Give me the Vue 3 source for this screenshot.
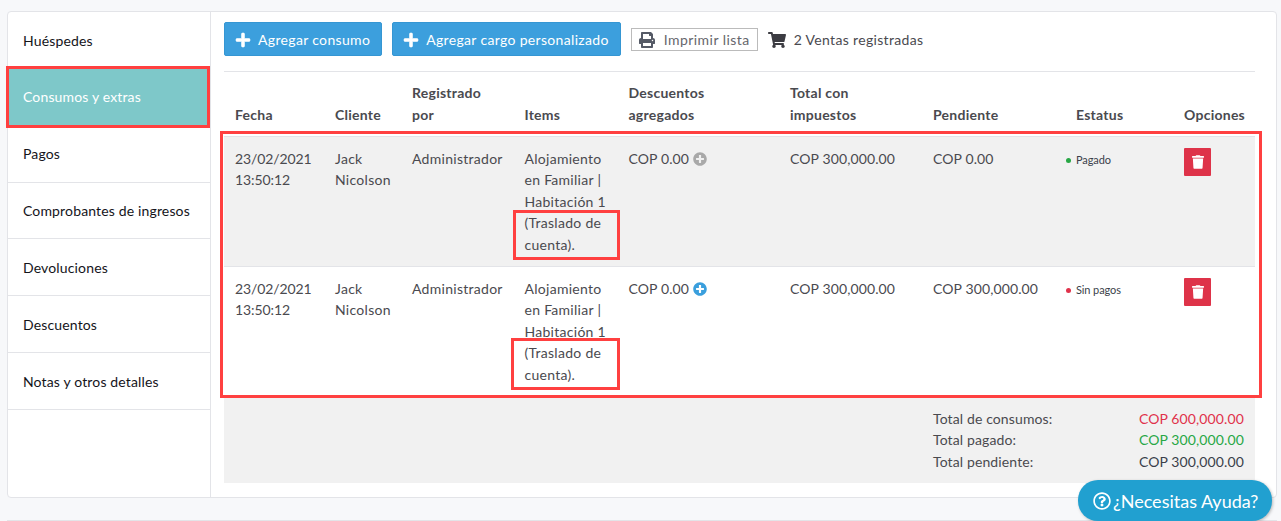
<script setup>
const menu = ['Huéspedes', 'Consumos y extras', 'Pagos', 'Comprobantes de ingresos', 'Devoluciones', 'Descuentos', 'Notas y otros detalles']
const heads = ['Fecha', 'Cliente', 'Registrado por', 'Items', 'Descuentos agregados', 'Total con impuestos', 'Pendiente', 'Estatus', 'Opciones']
const rows = [
  { pending: 'COP 0.00', status: 'Pagado', kind: 'paid', shaded: true },
  { pending: 'COP 300,000.00', status: 'Sin pagos', kind: 'unpaid', shaded: false },
]
const plus = 'M416 208H272V64c0-17.67-14.33-32-32-32h-32c-17.67 0-32 14.33-32 32v144H32c-17.67 0-32 14.33-32 32v32c0 17.67 14.33 32 32 32h144v144c0 17.67 14.33 32 32 32h32c17.67 0 32-14.33 32-32V304h144c17.67 0 32-14.33 32-32v-32c0-17.67-14.33-32-32-32z'
const plusCircle = 'M256 8C119 8 8 119 8 256s111 248 248 248 248-111 248-248S393 8 256 8zm144 276c0 6.6-5.4 12-12 12h-92v92c0 6.6-5.4 12-12 12h-56c-6.6 0-12-5.4-12-12v-92h-92c-6.6 0-12-5.4-12-12v-56c0-6.6 5.4-12 12-12h92v-92c0-6.6 5.4-12 12-12h56c6.6 0 12 5.4 12 12v92h92c6.6 0 12 5.4 12 12v56z'
const trash = 'M432 32H312l-9.4-18.7A24 24 0 0 0 281.1 0H166.8a23.72 23.72 0 0 0-21.4 13.3L136 32H16A16 16 0 0 0 0 48v32a16 16 0 0 0 16 16h416a16 16 0 0 0 16-16V48a16 16 0 0 0-16-16zM53.2 467a48 48 0 0 0 47.9 45h245.8a48 48 0 0 0 47.9-45L416 128H32z'
</script>

<template>
  <div class="page">
    <div class="card">
      <nav class="side">
        <div v-for="(m, i) in menu" :key="m" class="item" :class="{ active: i === 1 }">{{ m }}</div>
      </nav>
      <main class="content">
        <div class="toolbar">
          <button class="btn">
            <svg class="plus" viewBox="0 0 448 512"><path :d="plus" fill="#fff" stroke="#fff" stroke-width="18" /></svg>Agregar consumo
          </button>
          <button class="btn">
            <svg class="plus" viewBox="0 0 448 512"><path :d="plus" fill="#fff" stroke="#fff" stroke-width="18" /></svg>Agregar cargo personalizado
          </button>
          <button class="print">
            <svg class="printer" viewBox="0 0 512 512"><path fill="#555a66" d="M448 192V77.25c0-8.49-3.37-16.62-9.37-22.63L393.37 9.37c-6-6-14.14-9.37-22.63-9.37H96C78.33 0 64 14.33 64 32v160c-35.35 0-64 28.65-64 64v112c0 8.84 7.16 16 16 16h48v96c0 17.67 14.33 32 32 32h320c17.67 0 32-14.33 32-32v-96h48c8.84 0 16-7.16 16-16V256c0-35.35-28.65-64-64-64zm-64 256H128v-96h256v96zm0-224H128V64h192v48c0 8.84 7.16 16 16 16h48v96zm48 72c-13.25 0-24-10.75-24-24 0-13.26 10.75-24 24-24s24 10.74 24 24c0 13.25-10.75 24-24 24z" /></svg>Imprimir lista
          </button>
          <div class="sales">
            <svg class="cart" viewBox="0 0 576 512"><path fill="#3c3c42" d="M528.12 301.319l47.273-208C578.806 78.301 567.391 64 551.99 64H159.208l-9.166-44.81C147.758 8.021 137.93 0 126.529 0H24C10.745 0 0 10.745 0 24v16c0 13.255 10.745 24 24 24h69.883l70.248 343.435C147.325 417.1 136 435.222 136 456c0 30.928 25.072 56 56 56s56-25.072 56-56c0-15.674-6.447-29.835-16.824-40h209.647C430.447 426.165 424 440.326 424 456c0 30.928 25.072 56 56 56s56-25.072 56-56c0-22.172-12.888-41.332-31.579-50.405l5.517-24.276c3.413-15.018-8.002-29.319-23.403-29.319H218.117l-6.545-32h293.145c11.206 0 20.92-7.754 23.403-18.681z" /></svg>2 Ventas registradas
          </div>
        </div>

        <div class="table">
          <div class="grid head">
            <div v-for="h in heads" :key="h" class="cell">{{ h }}</div>
          </div>
          <div v-for="(r, i) in rows" :key="i" class="grid row" :class="{ shaded: r.shaded }">
            <div class="cell date">23/02/2021 13:50:12</div>
            <div class="cell">Jack Nicolson</div>
            <div class="cell">Administrador</div>
            <div class="cell">Alojamiento en Familiar | Habitación 1 (Traslado de cuenta).</div>
            <div class="cell num discount">
              COP 0.00
              <svg class="pc" viewBox="0 0 512 512"><path :d="plusCircle" :fill="r.shaded ? '#a9a9a9' : '#3a9fdd'" /></svg>
            </div>
            <div class="cell num">COP 300,000.00</div>
            <div class="cell num">{{ r.pending }}</div>
            <div class="cell status" :class="r.kind"><span class="dot"></span>{{ r.status }}</div>
            <div class="cell">
              <button class="del"><svg viewBox="0 0 448 512"><path :d="trash" fill="#fff" /></svg></button>
            </div>
          </div>
          <div class="totals">
            <div class="sum">
              <div class="line"><span>Total de consumos:</span><span class="red">COP 600,000.00</span></div>
              <div class="line"><span>Total pagado:</span><span class="green">COP 300,000.00</span></div>
              <div class="line"><span>Total pendiente:</span><span class="dark">COP 300,000.00</span></div>
            </div>
          </div>
        </div>
      </main>
    </div>
    <div class="next"></div>

    <div class="mark m-side"></div>
    <div class="mark m-table"></div>
    <div class="mark m-item1"></div>
    <div class="mark m-item2"></div>

    <button class="help">
      <svg viewBox="0 0 512 512"><path fill="#fff" d="M256 8C119.043 8 8 119.083 8 256c0 136.997 111.043 248 248 248s248-111.003 248-248C504 119.083 392.957 8 256 8zm0 448c-110.532 0-200-89.431-200-200 0-110.495 89.472-200 200-200 110.491 0 200 89.471 200 200 0 110.53-89.431 200-200 200zm107.244-255.2c0 67.052-72.421 68.084-72.421 92.863V300c0 6.627-5.373 12-12 12h-45.647c-6.627 0-12-5.373-12-12v-8.659c0-35.745 27.1-50.034 47.579-61.516 17.561-9.845 28.324-16.541 28.324-29.579 0-17.246-21.999-28.693-39.784-28.693-23.189 0-33.894 10.977-48.942 29.969-4.057 5.12-11.46 6.071-16.666 2.124l-27.824-21.098c-5.107-3.872-6.251-11.066-2.644-16.363C184.846 131.491 214.94 112 261.794 112c49.071 0 101.45 38.304 101.45 88.8zM298 368c0 23.159-18.841 42-42 42s-42-18.841-42-42 18.841-42 42-42 42 18.841 42 42z" /></svg>¿Necesitas Ayuda?
    </button>
  </div>
</template>

<style>
html, body { margin: 0; overflow: hidden; }
</style>

<style scoped>
.page {
  position: relative;
  height: 521px;
  overflow: hidden;
  box-sizing: border-box;
  padding: 11px 4px 0 7px;
  background: #f7f8fa;
  font: 14px/21.4px Lato, sans-serif;
  color: #4a4a4f;
}
.card {
  display: flex;
  height: 487px;
  box-sizing: border-box;
  background: #fff;
  border: 1px solid #e3e4e8;
  border-radius: 4px;
}
.side {
  width: 203px;
  flex: none;
  box-sizing: border-box;
  border-right: 1px solid #e3e4e8;
}
.item {
  padding: 17.6px 15px 16.85px;
  border-bottom: 1px solid #e3e4e8;
  color: #14141a;
  letter-spacing: 0.15px;
}
.item.active {
  background: #7ec8c9;
  color: #fff;
}
.content {
  flex: 1;
  min-width: 0;
  padding: 10px 21px 0 13px;
}
.toolbar {
  display: flex;
  align-items: center;
  gap: 10px;
  height: 34px;
  margin-bottom: 15px;
  letter-spacing: 0.33px;
}
.btn {
  display: flex;
  align-items: center;
  height: 34px;
  padding: 2px 11px 0;
  border: 1px solid #3596d3;
  border-radius: 2px;
  background: #3c9fdd;
  color: #fff;
  font: inherit;
  letter-spacing: inherit;
}
.plus { width: 14px; height: 16px; margin-right: 8px; overflow: visible; }
.print {
  display: flex;
  align-items: center;
  height: 23px;
  padding: 1px 7px 0;
  box-sizing: border-box;
  width: 127px;
  border: 1px solid #bbb;
  background: #fff;
  color: #66666c;
  font: inherit;
  letter-spacing: 0.45px;
}
.printer { width: 16px; height: 16px; margin-right: 9px; flex: none; }
.sales { display: flex; align-items: center; padding-top: 2px; }
.cart { width: 18px; height: 16px; margin-right: 8px; }
.table { border-top: 1px solid #e3e4e8; }
.grid {
  display: grid;
  grid-template-columns: 100px 77px 112.5px 104px 161.5px 143px 143px 108px 82px;
}
.cell { padding: 11px; letter-spacing: 0.28px; }
.cell.date { letter-spacing: -0.1px; }
.cell.num { letter-spacing: 0.12px; }
.head .cell {
  align-self: end;
  padding: 10.3px 11px 10.9px;
  font-weight: 700;
  letter-spacing: 0.25px;
}
.row { border-top: 1px solid #e3e4e8; }
.shaded { background: #f1f1f1; }
.discount { white-space: nowrap; }
.pc { width: 14px; height: 14px; vertical-align: -2px; }
.status {
  display: flex;
  align-items: flex-start;
  padding-left: 0;
  padding-top: 12px;
  font-size: 11px;
  color: #3a3f4a;
  letter-spacing: -0.1px;
}
.dot {
  flex: none;
  width: 5px;
  height: 5px;
  margin: 8.5px 5px 0 1px;
  border-radius: 50%;
}
.paid .dot { background: #28a745; }
.unpaid .dot { background: #e0324b; }
.del {
  display: flex;
  align-items: center;
  justify-content: center;
  width: 27px;
  height: 28px;
  padding: 0;
  border: 0;
  border-radius: 1px;
  background: #de3349;
}
.del svg { width: 12px; height: 14px; }
.totals {
  display: flex;
  justify-content: flex-end;
  padding: 12px 0 10.8px;
  background: #f1f1f1;
}
.sum { width: 322px; box-sizing: border-box; padding-right: 11px; letter-spacing: 0.12px; }
.line { display: flex; justify-content: space-between; }
.red { color: #e0324b; }
.green { color: #28a745; }
.dark { color: #3a3f4a; }
.next {
  height: 1px;
  margin-top: 22px;
  background: #e3e4e8;
}
.mark {
  position: absolute;
  box-sizing: border-box;
  border: 3px solid #ff4040;
  pointer-events: none;
}
.m-side { left: 6px; top: 66px; width: 204px; height: 62px; }
.m-table { left: 220px; top: 131px; width: 1042px; height: 267px; }
.m-item1 { left: 513px; top: 210px; width: 107px; height: 50px; }
.m-item2 { left: 511px; top: 338px; width: 109px; height: 52px; }
.help {
  position: absolute;
  left: 1078px;
  top: 480px;
  display: flex;
  align-items: center;
  width: 194px;
  height: 41px;
  padding: 0 0 0 15px;
  box-sizing: border-box;
  border: 0;
  border-radius: 20px;
  background: #21a0d0;
  color: #fff;
  font: 18px Lato, sans-serif;
  box-shadow: 1px 1px 3px rgba(0, 0, 0, 0.25);
}
.help svg { width: 18px; height: 18px; margin-right: 2px; }
</style>
